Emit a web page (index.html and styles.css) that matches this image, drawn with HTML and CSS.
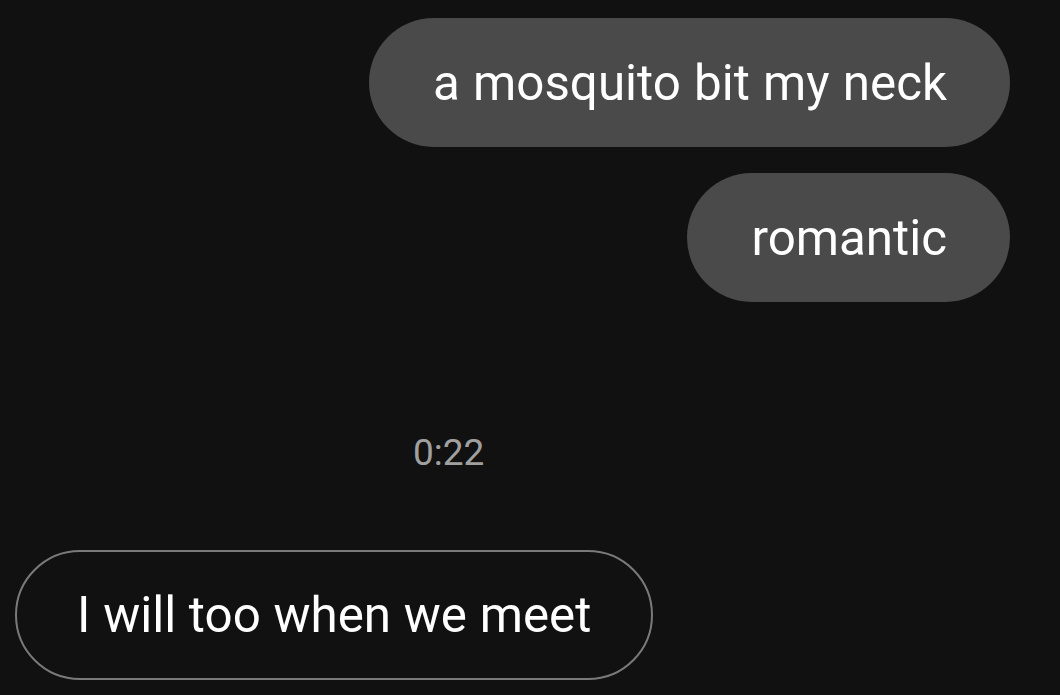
FILE: index.html
```html
<!DOCTYPE html>
<html>
<head>
<meta charset="utf-8">
<link rel="stylesheet" href="styles.css">
</head>
<body>
<div class="chat">
  <div class="row out"><div class="bubble sent">a mosquito bit my neck</div></div>
  <div class="row out gap"><div class="bubble sent">romantic</div></div>
  <div class="stamp">0:22</div>
  <div class="row in"><div class="bubble received">I will too when we meet</div></div>
</div>
</body>
</html>
```
FILE: styles.css
```css
html, body {
  margin: 0;
  padding: 0;
  background: #111111;
  height: 100%;
  overflow: hidden;
}
.chat {
  display: flex;
  flex-direction: column;
  padding: 18px 50px 0 15px;
  font-family: Roboto, "Liberation Sans", sans-serif;
}
.row {
  display: flex;
}
.row.out {
  justify-content: flex-end;
}
.row.gap {
  margin-top: 26px;
}
.bubble {
  box-sizing: border-box;
  height: 129px;
  display: flex;
  align-items: center;
  padding: 0 63px 0 64px;
  border-radius: 65px;
  font-size: 49.3px;
  word-spacing: 1px;
  color: #ffffff;
  white-space: nowrap;
}
.sent {
  background: #4a4a4a;
}
.received {
  background: #111111;
  border: 2px solid #7a7a7a;
  height: 130px;
  padding: 0 60px 0 60px;
  word-spacing: 0.5px;
}
.stamp {
  margin: 131px 0 77px 398px;
  height: 40px;
  line-height: 40px;
  font-size: 37px;
  color: #a0a0a0;
}
```
